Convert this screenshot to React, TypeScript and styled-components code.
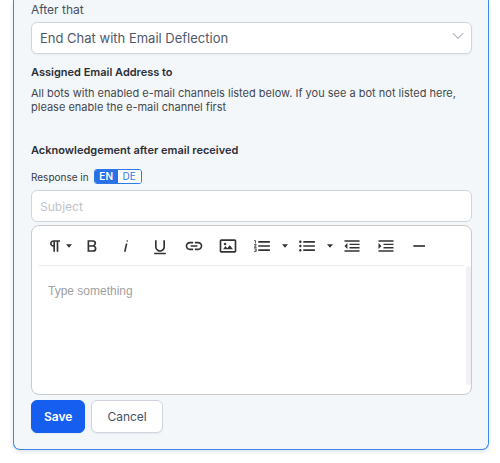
import React, { useState } from "react";
import styled, { createGlobalStyle, css } from "styled-components";

const GlobalStyle = createGlobalStyle`
  *, *::before, *::after { box-sizing: border-box; }
  body {
    margin: 0;
    background: #fff;
    color: #2c2f36;
    font-family: Inter, "Liberation Sans", sans-serif;
    font-size: 12px;
  }
  button, input, select, textarea { font: inherit; margin: 0; }
`;

const Card = styled.form`
  display: flex;
  flex-direction: column;
  margin: 0 11px 14px 13px;
  padding: 2px 16px 16px 17px;
  background: #f3f7fa;
  border: 1px solid #3f85ee;
  border-top: 0;
  border-radius: 0 0 7px 7px;
  box-shadow: 0 2px 4px rgba(40, 90, 170, 0.16);
`;

const Label = styled.label`
  align-self: flex-start;
  margin-bottom: 4px;
  line-height: 16px;
  color: #465064;
`;

const field = css`
  width: 100%;
  height: 32px;
  padding: 0 8px;
  background: #fff;
  border: 1px solid #d0d5dd;
  border-radius: 6px;
  outline: 0;
`;

const SelectBox = styled.div`
  display: grid;
  align-items: center;

  > * { grid-area: 1 / 1; }
  > svg {
    justify-self: end;
    margin: 0 8px 4px 0;
    pointer-events: none;
  }
`;

const Select = styled.select`
  ${field}
  appearance: none;
  padding-right: 32px;
  font-size: 13px;
  color: #50596a;
  box-shadow: 0 1px 2px rgba(16, 24, 40, 0.05);
`;

const Heading = styled.h2`
  margin: 0;
  font-size: 11px;
  font-weight: 600;
  line-height: 16px;
  color: #2c2f36;
`;

const AssignedSection = styled.section`
  margin: 10px 0 28px;
`;

const Text = styled.p`
  margin: 6px 0 0;
  font-size: 11px;
  line-height: 14px;
  color: #44474d;
`;

const LanguageRow = styled.div`
  display: flex;
  align-items: center;
  gap: 5px;
  margin: 11px 0 6px;
  font-size: 10px;
  color: #383b42;
`;

const LanguageSwitch = styled.div`
  display: flex;
  height: 15px;
  border: 1px solid #2f78ea;
  border-radius: 3px;
  overflow: hidden;
`;

const LanguageButton = styled.button<{ $active: boolean }>`
  width: 23px;
  padding: 0;
  border: 0;
  line-height: 13px;
  font-weight: ${(p) => (p.$active ? 600 : 400)};
  color: ${(p) => (p.$active ? "#fff" : "#2f78ea")};
  background: ${(p) => (p.$active ? "#2872e8" : "#fff")};
`;

const SubjectInput = styled.input`
  ${field}
  margin-bottom: 3px;
  color: #50596a;
  &::placeholder { color: #bfc3ca; opacity: 1; }
`;

const Editor = styled.div`
  display: flex;
  flex-direction: column;
  background: #fff;
  border: 1px solid #c9cacc;
  border-radius: 8px;
`;

const Toolbar = styled.div`
  display: flex;
  margin: 0 7px;
  padding: 5px 0 4px;
  border-bottom: 1px solid #ebebeb;
`;

const ToolButton = styled.button<{ $kind?: "menu" | "caret" }>`
  display: flex;
  flex: none;
  align-items: center;
  justify-content: ${(p) => (p.$kind === "menu" ? "flex-start" : "center")};
  gap: 1px;
  width: ${(p) => (p.$kind === "menu" ? 36 : p.$kind === "caret" ? 11 : 34)}px;
  height: 30px;
  padding: 0 0 0 ${(p) => (p.$kind === "menu" ? 6 : 0)}px;
  border: 0;
  background: none;
  color: #333;
`;

const EditorBody = styled.div`
  display: flex;
`;

const EditorText = styled.textarea`
  flex: 1;
  min-width: 0;
  height: 128px;
  padding: 17px 16px;
  border: 0;
  outline: 0;
  resize: none;
  background: none;
  font-family: "Liberation Sans", sans-serif;
  line-height: 16px;
  color: #333;
  &::placeholder { color: #a0a0a0; opacity: 1; }
`;

const ScrollTrack = styled.div`
  width: 5px;
  height: 119px;
  background: #f0f2f7;
  border-radius: 2px;
`;

const Actions = styled.div`
  display: flex;
  gap: 6px;
  margin-top: 5px;
`;

const ActionButton = styled.button<{ $primary?: boolean }>`
  height: 33px;
  padding: 0 ${(p) => (p.$primary ? 12 : 15)}px;
  border: 1px solid ${(p) => (p.$primary ? "#155eef" : "#d0d5dd")};
  border-radius: 6px;
  background: ${(p) => (p.$primary ? "#155eef" : "#fff")};
  color: ${(p) => (p.$primary ? "#fff" : "#465064")};
  font-weight: ${(p) => (p.$primary ? 600 : 400)};
  box-shadow: 0 1px 2px rgba(16, 24, 40, 0.05);
`;

const glyphs = {
  paragraph:
    "M10.15,5A4.11,4.11,0,0,0,6.08,8.18,4,4,0,0,0,10,13v6h2V7h2V19h2V7h2V5ZM8,9a2,2,0,0,1,2-2v4A2,2,0,0,1,8,9Z",
  bold: "M15.25,11.8h0A3.68,3.68,0,0,0,17,9a3.93,3.93,0,0,0-3.86-4H6.65V19h7a3.74,3.74,0,0,0,3.7-3.78V15.1A3.64,3.64,0,0,0,15.25,11.8ZM8.65,7h4.2a2.09,2.09,0,0,1,2,1.3,2.09,2.09,0,0,1-1.37,2.61,2.23,2.23,0,0,1-.63.09H8.65Zm4.6,10H8.65V13h4.6a2.09,2.09,0,0,1,2,1.3,2.09,2.09,0,0,1-1.37,2.61A2.23,2.23,0,0,1,13.25,17Z",
  italic: "M11.76,9h2l-2.2,10h-2Zm1.68-4a1,1,0,1,0,1,1,1,1,0,0,0-1-1Z",
  underline:
    "M19,20v2H5V20Zm-3-6.785a4,4,0,0,1-5.74,3.4A3.75,3.75,0,0,1,8,13.085V5.005H6v8.21a6,6,0,0,0,8,5.44,5.851,5.851,0,0,0,4-5.65v-8H16ZM16,5v0h2V5ZM8,5H6v0H8Z",
  link: "M3.9 12c0-1.71 1.39-3.1 3.1-3.1h4V7H7c-2.76 0-5 2.24-5 5s2.24 5 5 5h4v-1.9H7c-1.71 0-3.1-1.39-3.1-3.1zM8 13h8v-2H8v2zm9-6h-4v1.9h4c1.71 0 3.1 1.39 3.1 3.1s-1.39 3.1-3.1 3.1h-4V17h4c2.76 0 5-2.24 5-5s-2.24-5-5-5z",
  image:
    "M14.2,11l3.8,5H6l3-3.9l2.1,2.7L14,11H14.2z M8.5,11c0.8,0,1.5-0.7,1.5-1.5S9.3,8,8.5,8S7,8.7,7,9.5C7,10.3,7.7,11,8.5,11z M22,6v12c0,1.1-0.9,2-2,2H4c-1.1,0-2-0.9-2-2V6c0-1.1,0.9-2,2-2h16C21.1,4,22,4.9,22,6z M20,8.8V6H4v12h16V8.8z",
  ordered:
    "M2.5,16h2v.5h-1v1h1V18h-2v1h3V15h-3Zm1-7h1V5h-2V6h1Zm-1,2H4.3L2.5,13.1V14h3V13H3.7l1.8-2.1V10h-3Zm5-5V8h14V6Zm0,12h14V16H7.5Zm0-5h14V11H7.5Z",
  unordered:
    "M4,10.5c-.8,0-1.5.7-1.5,1.5s.7,1.5,1.5,1.5,1.5-.7,1.5-1.5S4.8,10.5,4,10.5ZM4,5.5C3.2,5.5,2.5,6.2,2.5,7S3.2,8.5,4,8.5,5.5,7.8,5.5,7,4.8,5.5,4,5.5Zm0,10c-.8,0-1.5.7-1.5,1.5s.7,1.5,1.5,1.5,1.5-.7,1.5-1.5S4.8,15.5,4,15.5ZM7.5,6V8h14V6Zm0,12h14V16H7.5Zm0-5h14V11H7.5Z",
  outdent: "M3,12l3.5,3.5v-7ZM3,19H21V17.2H3Zm6-4H21V13.2H9Zm0-4.2H21V9.2H9ZM3,5V6.8H21V5Z",
  indent: "M3,8.5v7L6.5,12ZM3,19H21V17.2H3Zm6-4H21V13.2H9Zm0-4.2H21V9.2H9ZM3,5V6.8H21V5Z",
  rule: "M4,11H18v2H4Z",
};

type GlyphName = keyof typeof glyphs;

const Glyph = ({ name }: { name: GlyphName }) => (
  <svg width="20" height="20" viewBox="0 0 24 24" fill="currentColor" aria-hidden="true">
    <path d={glyphs[name]} />
  </svg>
);

const Caret = () => (
  <svg width="6" height="4" viewBox="0 0 6 4" fill="currentColor" aria-hidden="true">
    <path d="M0 .3h6L3 3.7Z" />
  </svg>
);

const tools: { name: GlyphName; label: string; kind?: "menu" | "split" }[] = [
  { name: "paragraph", label: "Paragraph format", kind: "menu" },
  { name: "bold", label: "Bold" },
  { name: "italic", label: "Italic" },
  { name: "underline", label: "Underline" },
  { name: "link", label: "Insert link" },
  { name: "image", label: "Insert image" },
  { name: "ordered", label: "Ordered list", kind: "split" },
  { name: "unordered", label: "Unordered list", kind: "split" },
  { name: "outdent", label: "Decrease indent" },
  { name: "indent", label: "Increase indent" },
  { name: "rule", label: "Horizontal line" },
];

export default function App() {
  const [language, setLanguage] = useState("EN");

  return (
    <>
      <GlobalStyle />
      <Card onSubmit={(e) => e.preventDefault()}>
        <Label htmlFor="after">After that</Label>
        <SelectBox>
          <Select id="after">
            <option>End Chat with Email Deflection</option>
          </Select>
          <svg width="12" height="8" viewBox="0 0 12 8" fill="none" stroke="#8d93a5" aria-hidden="true">
            <path d="M.8 1.2 6 6.4l5.2-5.2" />
          </svg>
        </SelectBox>

        <AssignedSection>
          <Heading>Assigned Email Address to</Heading>
          <Text>
            All bots with enabled e-mail channels listed below. If you see a bot not listed here,
            please enable the e-mail channel first
          </Text>
        </AssignedSection>

        <Heading>Acknowledgement after email received</Heading>
        <LanguageRow>
          <span id="language">Response in</span>
          <LanguageSwitch role="group" aria-labelledby="language">
            {["EN", "DE"].map((code) => (
              <LanguageButton
                key={code}
                type="button"
                $active={code === language}
                aria-pressed={code === language}
                onClick={() => setLanguage(code)}
              >
                {code}
              </LanguageButton>
            ))}
          </LanguageSwitch>
        </LanguageRow>

        <SubjectInput aria-label="Subject" placeholder="Subject" />
        <Editor>
          <Toolbar role="toolbar" aria-label="Formatting">
            {tools.map(({ name, label, kind }) => (
              <React.Fragment key={name}>
                <ToolButton type="button" aria-label={label} $kind={kind === "menu" ? "menu" : undefined}>
                  <Glyph name={name} />
                  {kind === "menu" && <Caret />}
                </ToolButton>
                {kind === "split" && (
                  <ToolButton type="button" aria-label={`${label} options`} $kind="caret">
                    <Caret />
                  </ToolButton>
                )}
              </React.Fragment>
            ))}
          </Toolbar>
          <EditorBody>
            <EditorText aria-label="Message" placeholder="Type something" />
            <ScrollTrack />
          </EditorBody>
        </Editor>

        <Actions>
          <ActionButton type="submit" $primary>
            Save
          </ActionButton>
          <ActionButton type="button">Cancel</ActionButton>
        </Actions>
      </Card>
    </>
  );
}
